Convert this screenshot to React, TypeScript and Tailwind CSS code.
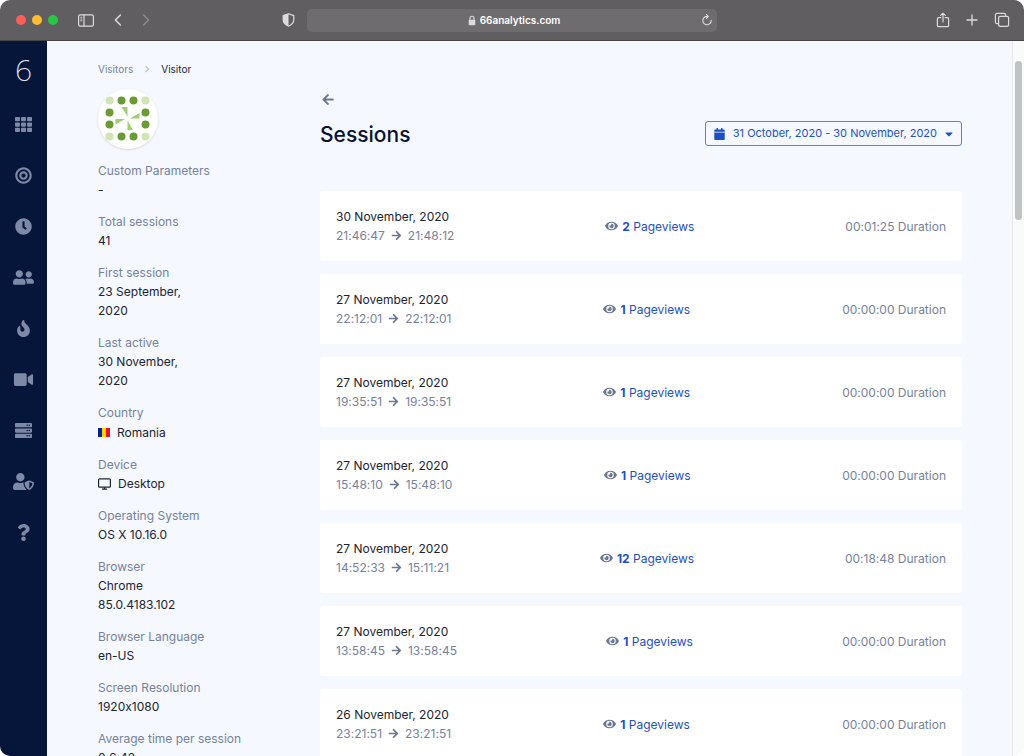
import type { ReactNode } from "react";
import {
  FaArrowLeft,
  FaArrowRight,
  FaBullseye,
  FaCalendar,
  FaCaretDown,
  FaClock,
  FaEye,
  FaFire,
  FaQuestion,
  FaServer,
  FaTh,
  FaUserFriends,
  FaUserShield,
  FaVideo,
} from "react-icons/fa";

const navItems = [
  { label: "Dashboard", Icon: FaTh },
  { label: "Realtime", Icon: FaBullseye },
  { label: "History", Icon: FaClock },
  { label: "Visitors", Icon: FaUserFriends },
  { label: "Heatmaps", Icon: FaFire },
  { label: "Replays", Icon: FaVideo },
  { label: "Websites", Icon: FaServer },
  { label: "Teams", Icon: FaUserShield },
  { label: "Help", Icon: FaQuestion },
];

const sessions = [
  { date: "30 November, 2020", from: "21:46:47", to: "21:48:12", views: 2, duration: "00:01:25" },
  { date: "27 November, 2020", from: "22:12:01", to: "22:12:01", views: 1, duration: "00:00:00" },
  { date: "27 November, 2020", from: "19:35:51", to: "19:35:51", views: 1, duration: "00:00:00" },
  { date: "27 November, 2020", from: "15:48:10", to: "15:48:10", views: 1, duration: "00:00:00" },
  { date: "27 November, 2020", from: "14:52:33", to: "15:11:21", views: 12, duration: "00:18:48" },
  { date: "27 November, 2020", from: "13:58:45", to: "13:58:45", views: 1, duration: "00:00:00" },
  { date: "26 November, 2020", from: "23:21:51", to: "23:21:51", views: 1, duration: "00:00:00" },
];

const RomaniaFlag = () => (
  <svg viewBox="0 0 12 9" className="h-[9px] w-3">
    <rect width="4" height="9" fill="#00209f" />
    <rect x="4" width="4" height="9" fill="#ffd500" />
    <rect x="8" width="4" height="9" fill="#e8112d" />
  </svg>
);

const DesktopIcon = () => (
  <svg viewBox="0 0 13 12" className="h-3 w-[13px]" fill="none" stroke="currentColor" strokeWidth="1.2">
    <rect x="0.6" y="0.9" width="11.8" height="8.2" rx="0.9" />
    <path d="M6.5 9.2v1.8M4 11.2h5" />
  </svg>
);

const details: { label: string; value: ReactNode }[] = [
  { label: "Custom Parameters", value: "-" },
  { label: "Total sessions", value: "41" },
  { label: "First session", value: "23 September, 2020" },
  { label: "Last active", value: "30 November, 2020" },
  {
    label: "Country",
    value: (
      <span className="flex items-center gap-[7px] pt-px">
        <RomaniaFlag /> Romania
      </span>
    ),
  },
  {
    label: "Device",
    value: (
      <span className="flex items-center gap-[7px]">
        <DesktopIcon /> Desktop
      </span>
    ),
  },
  { label: "Operating System", value: "OS X 10.16.0" },
  { label: "Browser", value: "Chrome 85.0.4183.102" },
  { label: "Browser Language", value: "en-US" },
  { label: "Screen Resolution", value: "1920x1080" },
  { label: "Average time per session", value: "0:6:42" },
];

function Toolbar() {
  return (
    <header className="flex h-[41px] shrink-0 items-center border-b border-[#464447] bg-[#615e61] text-[#dddcdd]">
      <div className="flex flex-1 items-center pl-4 pr-3">
        <div className="flex gap-[6px]">
          <span className="h-[10px] w-[10px] rounded-full bg-[#fe5f57]" />
          <span className="h-[10px] w-[10px] rounded-full bg-[#febc2e]" />
          <span className="h-[10px] w-[10px] rounded-full bg-[#28c840]" />
        </div>
        <button aria-label="Sidebar" className="ml-5">
          <svg viewBox="0 0 16 13" className="h-[13px] w-4" fill="none" stroke="currentColor" strokeWidth="1.2">
            <rect x="0.6" y="0.8" width="14.8" height="11.4" rx="1.6" />
            <path d="M6 0.8v11.4" />
            <path d="M2.3 3.2h2M2.3 5h2M2.3 6.8h2" strokeWidth="0.9" />
          </svg>
        </button>
        <button aria-label="Back" className="ml-5">
          <svg viewBox="0 0 8 12" className="h-3 w-2" fill="none" stroke="currentColor" strokeWidth="1.5" strokeLinecap="round" strokeLinejoin="round">
            <path d="M6.4 1 1.4 6l5 5" />
          </svg>
        </button>
        <button aria-label="Forward" className="ml-5 text-[#8d8b8d]">
          <svg viewBox="0 0 8 12" className="h-3 w-2" fill="none" stroke="currentColor" strokeWidth="1.5" strokeLinecap="round" strokeLinejoin="round">
            <path d="m1.6 1 5 5-5 5" />
          </svg>
        </button>
        <button aria-label="Privacy report" className="ml-auto">
          <svg viewBox="0 0 13 14" className="h-[14px] w-[13px]">
            <path d="M6.5 0.8 11.8 2.6v4.2c0 3-2.2 5-5.3 6.4C3.4 11.8 1.2 9.8 1.2 6.8V2.6Z" fill="none" stroke="currentColor" strokeWidth="1.2" strokeLinejoin="round" />
            <path d="M6.5 0.8 1.2 2.6v4.2c0 3 2.2 5 5.3 6.4Z" fill="currentColor" />
          </svg>
        </button>
      </div>
      <div className="flex h-[23px] w-2/5 items-center rounded-[5px] bg-[#6f6c6f] px-1">
        <div className="flex flex-1 items-center justify-center gap-1 pl-4 text-[10px] font-semibold text-white">
          <svg viewBox="0 0 8 11" className="h-[11px] w-2">
            <path d="M2 5V3.2a2 2 0 0 1 4 0V5" fill="none" stroke="#dddcdd" strokeWidth="1.1" />
            <rect x="0.7" y="4.7" width="6.6" height="5.6" rx="1" fill="#dddcdd" />
          </svg>
          66analytics.com
        </div>
        <button aria-label="Reload">
          <svg viewBox="0 0 12 12" className="h-3 w-3" fill="none" stroke="currentColor" strokeWidth="1.1" strokeLinecap="round" strokeLinejoin="round">
            <path d="M10.2 6.4A4.2 4.2 0 1 1 6 2.4h1.2M5.5 0.7l1.8 1.7-1.8 1.9" />
          </svg>
        </button>
      </div>
      <div className="flex flex-1 items-center justify-end gap-4 px-[14px]">
        <button aria-label="Share">
          <svg viewBox="0 0 14 16" className="h-4 w-[14px]" fill="none" stroke="currentColor" strokeWidth="1.2" strokeLinecap="round" strokeLinejoin="round">
            <path d="M4.8 5.7H2.6a1.2 1.2 0 0 0-1.2 1.2v6.6a1.2 1.2 0 0 0 1.2 1.2h8.8a1.2 1.2 0 0 0 1.2-1.2V6.9a1.2 1.2 0 0 0-1.2-1.2H9.2M7 10V1.2M4.7 3.4 7 1.1l2.3 2.3" />
          </svg>
        </button>
        <button aria-label="New tab">
          <svg viewBox="0 0 12 12" className="h-3 w-3" fill="none" stroke="currentColor" strokeWidth="1.3" strokeLinecap="round">
            <path d="M6 1v10M1 6h10" />
          </svg>
        </button>
        <button aria-label="Tab overview">
          <svg viewBox="0 0 16 16" className="h-4 w-4" fill="none" stroke="currentColor" strokeWidth="1.2" strokeLinejoin="round">
            <rect x="4.6" y="4.4" width="10" height="10" rx="1.6" />
            <path d="M4.4 11.6H2.9a1.5 1.5 0 0 1-1.5-1.5V2.9a1.5 1.5 0 0 1 1.5-1.5h7.2a1.5 1.5 0 0 1 1.5 1.5v1.3" />
          </svg>
        </button>
      </div>
    </header>
  );
}

function Sidebar() {
  return (
    <nav className="flex w-[47px] shrink-0 flex-col items-center bg-[#06163a] pt-[11px]">
      <a href="#home" className="font-['Noto_Sans',sans-serif] text-[30px] leading-9 font-extralight text-[#e3e9f8]">
        6
      </a>
      <div className="mt-[11px] flex flex-col">
        {navItems.map(({ label, Icon }) => (
          <a key={label} href="#" aria-label={label} className="flex h-[51px] items-center justify-center text-[#7d89a6]">
            <Icon className="h-[17px] w-[21px]" />
          </a>
        ))}
      </div>
    </nav>
  );
}

function Avatar() {
  const dark = [
    [23.5, 11.5], [35.5, 11.5], [11.5, 23.5], [47.5, 23.5],
    [11.5, 35.5], [47.5, 35.5], [23.5, 47.5], [35.5, 47.5],
  ];
  const light = [[11.5, 11.5], [47.5, 11.5], [11.5, 47.5], [47.5, 47.5]];

  return (
    <svg viewBox="0 0 60 60" className="h-[60px] w-[60px] rounded-full bg-white shadow-sm">
      {dark.map(([x, y]) => (
        <circle key={`${x}-${y}`} cx={x} cy={y} r="4" fill="#6a9b34" />
      ))}
      {light.map(([x, y]) => (
        <circle key={`${x}-${y}`} cx={x} cy={y} r="4" fill="#d0e4b4" />
      ))}
      <path d="M23.5 18h6v9.5ZM32 29.5l9.5-5.5v5.5ZM17.5 30H27l-9.5 5.5ZM29.5 31.5l5.5 9.5h-5.5Z" fill="#a1cd73" />
    </svg>
  );
}

function VisitorDetails() {
  return (
    <aside className="w-[222px] shrink-0">
      <Avatar />
      <dl className="mt-3 text-xs leading-[19px]">
        {details.map(({ label, value }) => (
          <div key={label} className="mb-[13px]">
            <dt className="text-[#76829a]">{label}</dt>
            <dd className="max-w-24 text-[#1c2333]">{value}</dd>
          </div>
        ))}
      </dl>
    </aside>
  );
}

function Sessions() {
  return (
    <section className="min-w-0 flex-1 pt-1">
      <a href="#visitors" aria-label="Back to visitors" className="flex h-3 w-4 items-center justify-center text-[#6b7891]">
        <FaArrowLeft className="h-[13px] w-3" />
      </a>
      <div className="mt-4 flex items-start justify-between">
        <h1 className="text-[21px] leading-7 font-medium text-[#0a1230]">Sessions</h1>
        <button className="flex h-[25px] items-center rounded-[3px] border border-[#5b7fd6] px-2 text-[11px] text-[#1d50c4]">
          <FaCalendar className="h-3 w-[11px]" />
          <span className="mr-2 ml-2">31 October, 2020 - 30 November, 2020</span>
          <FaCaretDown className="h-3 w-2" />
        </button>
      </div>
      <ul className="mt-[42px] flex flex-col gap-[13px] text-xs leading-[19px] text-[#76829a]">
        {sessions.map((s) => (
          <li key={`${s.date}-${s.from}`} className="flex items-center justify-between rounded-[3px] bg-white p-4">
            <div>
              <div className="text-[#1c2333]">{s.date}</div>
              <div className="flex items-center gap-[6px]">
                {s.from}
                <FaArrowRight className="h-[11px] w-[11px] text-[#6b7891]" />
                {s.to}
              </div>
            </div>
            <div className="flex items-center gap-1">
              <FaEye className="h-3 w-[13px] text-[#6b7891]" />
              <a href="#pageviews" className="text-[#1d4fc0]">
                <strong className="font-bold">{s.views}</strong> Pageviews
              </a>
            </div>
            <div>{s.duration} Duration</div>
          </li>
        ))}
      </ul>
    </section>
  );
}

export default function App() {
  return (
    <div className="flex h-screen flex-col overflow-hidden rounded-[10px] font-['Inter',sans-serif] [font-feature-settings:'calt'_0]">
      <Toolbar />
      <div className="flex min-h-0 flex-1 bg-[#f5f8ff]">
        <Sidebar />
        <main className="min-w-0 flex-1 overflow-hidden pt-5 pr-[50px] pl-[51px]">
          <nav aria-label="Breadcrumb" className="flex items-center text-[10px] leading-4">
            <a href="#visitors" className="text-[#76829a]">Visitors</a>
            <svg viewBox="0 0 6 8" className="mx-[11px] h-2 w-[6px]" fill="none" stroke="#b9c2d2" strokeWidth="1.3">
              <path d="m1.5 1 3 3-3 3" />
            </svg>
            <span className="text-[#1c2333]">Visitor</span>
          </nav>
          <div className="mt-3 flex">
            <VisitorDetails />
            <Sessions />
          </div>
        </main>
        <div className="w-3 shrink-0 border-l border-[#e6e7ea] bg-[#fafafb] px-[2px] pt-5">
          <div className="h-[159px] rounded-full bg-[#c1c2c3]" />
        </div>
      </div>
    </div>
  );
}
